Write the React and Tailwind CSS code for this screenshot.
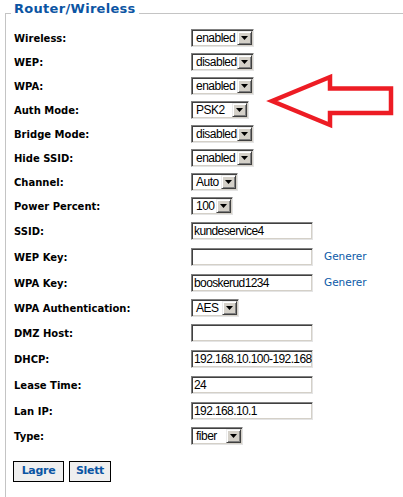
import React from "react";

const rows = [
  { label: "Wireless:", kind: "select", value: "enabled", w: "w-[63px]" },
  { label: "WEP:", kind: "select", value: "disabled", w: "w-[63px]" },
  { label: "WPA:", kind: "select", value: "enabled", w: "w-[63px]" },
  { label: "Auth Mode:", kind: "select", value: "PSK2", w: "w-[58px]" },
  { label: "Bridge Mode:", kind: "select", value: "disabled", w: "w-[63px]" },
  { label: "Hide SSID:", kind: "select", value: "enabled", w: "w-[63px]" },
  { label: "Channel:", kind: "select", value: "Auto", w: "w-[47px]" },
  { label: "Power Percent:", kind: "select", value: "100", w: "w-[42px]" },
  { label: "SSID:", kind: "input", value: "kundeservice4" },
  { label: "WEP Key:", kind: "input", value: "", link: "Generer" },
  { label: "WPA Key:", kind: "input", value: "booskerud1234", link: "Generer" },
  { label: "WPA Authentication:", kind: "select", value: "AES", w: "w-[48px]" },
  { label: "DMZ Host:", kind: "input", value: "" },
  { label: "DHCP:", kind: "input", value: "192.168.10.100-192.168" },
  { label: "Lease Time:", kind: "input", value: "24" },
  { label: "Lan IP:", kind: "input", value: "192.168.10.1" },
  { label: "Type:", kind: "select", value: "fiber", w: "w-[52px]" },
];

const sunken =
  "border border-t-[#808080] border-l-[#808080] border-b-[#e4e4e4] border-r-[#e4e4e4] shadow-[inset_1px_1px_0_#404040,inset_-1px_-1px_0_#d4d0c8] bg-white";

function Select({ value, w }) {
  return (
    <div className={`flex h-[18px] p-px ${w} ${sunken}`}>
      <div className="flex-1 min-w-0 overflow-hidden whitespace-nowrap pl-[3px] text-[12px] leading-[14px] tracking-[-0.5px] text-black font-['Liberation_Sans',Arial,sans-serif]">
        {value}
      </div>
      <div className="flex w-[15px] shrink-0 items-center justify-center bg-[#d4d0c8] border border-t-[#ececec] border-l-[#ececec] border-b-[#404040] border-r-[#404040] shadow-[inset_1px_1px_0_#fff,inset_-1px_-1px_0_#808080]">
        <svg width="7" height="4" viewBox="0 0 7 4">
          <path d="M0 0h7L3.5 4z" fill="#000" />
        </svg>
      </div>
    </div>
  );
}

function TextInput({ value }) {
  return (
    <div className={`h-[18px] w-[122px] overflow-hidden whitespace-nowrap pl-[2px] pt-px text-[12px] leading-[14px] tracking-[-0.6px] text-black font-['Liberation_Sans',Arial,sans-serif] ${sunken}`}>
      {value}
    </div>
  );
}

export default function App() {
  return (
    <div className="relative w-[403px] h-[497px] overflow-hidden bg-white font-['DejaVu_Sans',Verdana,sans-serif]">
      {/* legend line */}
      <div className="flex h-[14px] pl-[5px]">
        <div className="w-[6px] h-[14px] border-b border-[#c4c4c4]" />
        <div className="px-[3px] pt-[2px] text-[13px] leading-[14px] font-bold tracking-[0.3px] text-[#0b55a3] whitespace-nowrap">
          Router/Wireless
        </div>
        <div className="flex-1 h-[14px] border-b border-[#c4c4c4]" />
      </div>

      <div className="ml-[5px] h-[483px] border-l border-[#c4c4c4] pl-[8px] pt-[12px]">
        {rows.map((r) => (
          <div
            key={r.label}
            className={`flex items-center ${r.kind === "input" ? "h-[26px]" : "h-[24px]"}`}
          >
            <div className="w-[177px] shrink-0 text-[10px] font-bold text-black">{r.label}</div>
            {r.kind === "select" ? <Select value={r.value} w={r.w} /> : <TextInput value={r.value} />}
            {r.link && (
              <span className="ml-[11px] text-[10.5px] text-[#0a5aa8]">{r.link}</span>
            )}
          </div>
        ))}

        <div className="-ml-px mt-[13px] flex gap-[5px]">
          <button className="h-[21px] w-[51px] border border-black bg-[#efefef] text-[11px] font-bold tracking-[-0.3px] text-[#0b55a3]">
            Lagre
          </button>
          <button className="h-[21px] w-[42px] border border-black bg-[#efefef] text-[11px] font-bold tracking-[-0.3px] text-[#0b55a3]">
            Slett
          </button>
        </div>
      </div>

      {/* red annotation arrow */}
      <svg
        className="pointer-events-none absolute left-0 top-0"
        width="403"
        height="497"
        viewBox="0 0 403 497"
      >
        <polygon
          points="272,101 330,77 330,88.5 391,88.5 391,113 330,113 330,125"
          fill="none"
          stroke="#ed1c24"
          strokeWidth="4.5"
          strokeLinejoin="miter"
        />
      </svg>
    </div>
  );
}
